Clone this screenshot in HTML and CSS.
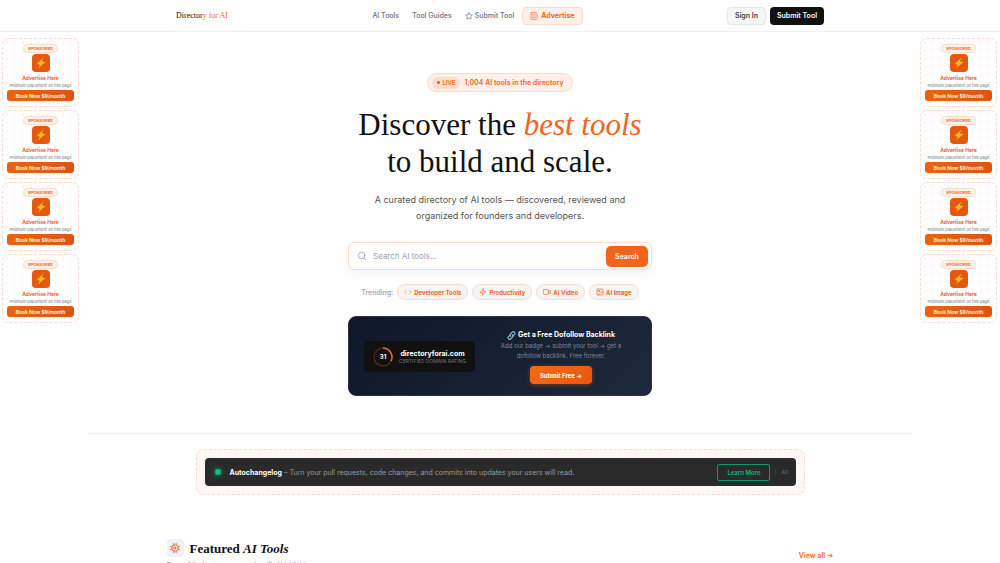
FILE: index.html
```html
<!DOCTYPE html>
<html lang="en">
<head>
  <meta charset="UTF-8">
  <meta name="viewport" content="width=device-width, initial-scale=1.0">
  <title>Directory for AI</title>
  <link rel="stylesheet" href="styles.css">
</head>
<body>

  <!-- Shared icons -->
  <svg class="sprite" aria-hidden="true">
    <symbol id="bolt" viewBox="0 0 24 24">
      <path d="M17 1 3 14l7 1.500L6 23l15-13-7.500-1.500z" fill="#fdb52a"/>
    </symbol>
  </svg>

  <!-- Header -->
  <header class="header">
    <div class="header-inner">
      <a class="logo" href="#">Director<span>y for AI</span></a>
      <nav class="nav">
        <a href="#">AI Tools</a>
        <a href="#">Tool Guides</a>
        <a href="#">
          <svg class="icon" viewBox="0 0 24 24"><path d="m12 2 3.100 6.300 6.900 1-5 4.900 1.200 6.800L12 17.800 5.800 21 7 14.200 2 9.300l6.900-1z"/></svg>
          Submit Tool
        </a>
        <a class="nav-ad" href="#">
          <svg class="icon" viewBox="0 0 24 24"><rect x="3" y="2" width="18" height="20" rx="2"/><path d="M8 7h2M14 7h2M8 12h2M14 12h2M8 17h2M14 17h2"/></svg>
          Advertise
        </a>
      </nav>
      <div class="header-actions">
        <button class="button button-light">Sign In</button>
        <button class="button button-dark">Submit Tool</button>
      </div>
    </div>
  </header>

  <div class="layout">

    <!-- Left ads -->
    <aside class="ads ads-left">
      <div class="ad">
        <span class="ad-tag">SPONSORED</span>
        <span class="ad-icon"><svg><use href="#bolt"/></svg></span>
        <strong>Advertise Here</strong>
        <p>Premium placement on this page</p>
        <button class="ad-button">Book Now $9/month</button>
      </div>
      <div class="ad">
        <span class="ad-tag">SPONSORED</span>
        <span class="ad-icon"><svg><use href="#bolt"/></svg></span>
        <strong>Advertise Here</strong>
        <p>Premium placement on this page</p>
        <button class="ad-button">Book Now $9/month</button>
      </div>
      <div class="ad">
        <span class="ad-tag">SPONSORED</span>
        <span class="ad-icon"><svg><use href="#bolt"/></svg></span>
        <strong>Advertise Here</strong>
        <p>Premium placement on this page</p>
        <button class="ad-button">Book Now $9/month</button>
      </div>
      <div class="ad">
        <span class="ad-tag">SPONSORED</span>
        <span class="ad-icon"><svg><use href="#bolt"/></svg></span>
        <strong>Advertise Here</strong>
        <p>Premium placement on this page</p>
        <button class="ad-button">Book Now $9/month</button>
      </div>
    </aside>

    <main class="main">

      <!-- Hero -->
      <section class="hero">
        <div class="live-badge"><span class="live">LIVE</span>1,004 AI tools in the directory</div>
        <h1>Discover the <em>best tools</em><br>to build and scale.</h1>
        <p class="lead">A curated directory of AI tools — discovered, reviewed and organized for founders and developers.</p>

        <form class="search">
          <svg class="icon" viewBox="0 0 24 24"><circle cx="11" cy="11" r="8"/><path d="m21 21-4.300-4.300"/></svg>
          <input type="text" placeholder="Search AI tools..." aria-label="Search AI tools">
          <button type="button">Search</button>
        </form>

        <div class="trending">
          <span>Trending:</span>
          <a class="chip" href="#"><svg class="icon faint" viewBox="0 0 24 24"><path d="m8 6-6 6 6 6M16 6l6 6-6 6"/></svg>Developer Tools</a>
          <a class="chip" href="#"><svg class="icon" viewBox="0 0 24 24"><path d="M13 2 3 14h8l-1 8 11-12h-8z"/></svg>Productivity</a>
          <a class="chip" href="#"><svg class="icon" viewBox="0 0 24 24"><rect x="1" y="5" width="15" height="14" rx="2"/><path d="m16 11 6-4v10l-6-4"/></svg>AI Video</a>
          <a class="chip" href="#"><svg class="icon" viewBox="0 0 24 24"><rect x="3" y="3" width="18" height="18" rx="2"/><circle cx="9" cy="9" r="2"/><path d="m21 15-4-4L6 21"/></svg>AI Image</a>
        </div>

        <!-- Backlink card -->
        <div class="backlink">
          <div class="rating">
            <div class="ring">
              <svg viewBox="0 0 40 40"><circle cx="20" cy="20" r="18" stroke="#4b2614"/><path d="M20 2a18 18 0 0 1 16 26" stroke="#f26a1b"/></svg>
              <b>31</b>
            </div>
            <div class="rating-text">
              <strong>directoryforai.com</strong>
              <small>CERTIFIED DOMAIN RATING</small>
            </div>
          </div>
          <div class="backlink-text">
            <h2>
              <svg viewBox="0 0 24 24"><g fill="none" stroke="#8fb8cf" stroke-width="3" stroke-linecap="round"><path d="m10 14-1-1a4 4 0 0 1 0-5l5-5a4 4 0 0 1 6 6l-4 4"/><path d="m14 10 1 1a4 4 0 0 1 0 5l-5 5a4 4 0 0 1-6-6l4-4"/></g></svg>
              Get a Free Dofollow Backlink
            </h2>
            <p>Add our badge → submit your tool → get a dofollow backlink. Free forever.</p>
            <button>Submit Free →</button>
          </div>
        </div>
      </section>

      <!-- Banner -->
      <section class="banner">
        <div class="banner-bar">
          <span class="dot"></span>
          <p><strong>Autochangelog</strong> – Turn your pull requests, code changes, and commits into updates your users will read.</p>
          <a class="learn" href="#">Learn More</a>
          <span class="ad-label">AD</span>
        </div>
      </section>

      <!-- Featured -->
      <section class="featured">
        <span class="featured-icon">
          <svg class="icon" viewBox="0 0 24 24"><rect x="5" y="5" width="14" height="14" rx="3"/><rect x="10" y="10" width="4" height="4"/><path d="M9 1v4M15 1v4M9 19v4M15 19v4M1 9h4M1 15h4M19 9h4M19 15h4"/></svg>
        </span>
        <h2>Featured <em>AI Tools</em></h2>
        <a href="#">View all →</a>
        <p>Some of the best new apps and verified highlights</p>
      </section>
    </main>

    <!-- Right ads -->
    <aside class="ads ads-right">
      <div class="ad">
        <span class="ad-tag">SPONSORED</span>
        <span class="ad-icon"><svg><use href="#bolt"/></svg></span>
        <strong>Advertise Here</strong>
        <p>Premium placement on this page</p>
        <button class="ad-button">Book Now $9/month</button>
      </div>
      <div class="ad">
        <span class="ad-tag">SPONSORED</span>
        <span class="ad-icon"><svg><use href="#bolt"/></svg></span>
        <strong>Advertise Here</strong>
        <p>Premium placement on this page</p>
        <button class="ad-button">Book Now $9/month</button>
      </div>
      <div class="ad">
        <span class="ad-tag">SPONSORED</span>
        <span class="ad-icon"><svg><use href="#bolt"/></svg></span>
        <strong>Advertise Here</strong>
        <p>Premium placement on this page</p>
        <button class="ad-button">Book Now $9/month</button>
      </div>
      <div class="ad">
        <span class="ad-tag">SPONSORED</span>
        <span class="ad-icon"><svg><use href="#bolt"/></svg></span>
        <strong>Advertise Here</strong>
        <p>Premium placement on this page</p>
        <button class="ad-button">Book Now $9/month</button>
      </div>
    </aside>
  </div>

</body>
</html>
```
FILE: styles.css
```css
* {
  box-sizing: border-box;
  margin: 0;
}
body {
  background-color: #fefefe;
  color: #111;
  font-family: Inter, "Liberation Sans", sans-serif;
  font-size: 7px;
}
a {
  color: inherit;
  text-decoration: none;
}
button {
  border: none;
  font-family: inherit;
  cursor: pointer;
  white-space: nowrap;
}
.sprite {
  position: absolute;
  width: 0;
  height: 0;
}
.icon {
  width: 8px;
  height: 8px;
  flex: none;
  fill: none;
  stroke: currentColor;
  stroke-width: 2;
  stroke-linecap: round;
  stroke-linejoin: round;
}
/* Header */
.header {
  border-bottom: 1px solid #f1f1f1;
}
.header-inner {
  display: flex;
  align-items: center;
  justify-content: space-between;
  max-width: 648px;
  height: 31px;
  margin: 0 auto;
}
.logo {
  font-family: "Liberation Serif", serif;
  font-size: 8px;
}
.logo span {
  color: #f26a1b;
}
.nav {
  display: flex;
  align-items: center;
  gap: 13px;
  color: #6b7280;
  font-weight: 500;
}
.nav a {
  display: flex;
  align-items: center;
  gap: 2px;
}
.nav .nav-ad {
  gap: 3px;
  height: 18px;
  margin-left: -5px;
  padding: 0 7px;
  background-color: #fff1e9;
  border: 1px solid #fddccb;
  border-radius: 4px;
  color: #f2641a;
  font-weight: 700;
}
.header-actions {
  display: flex;
  gap: 4px;
}
.button {
  height: 18px;
  padding: 0 7px;
  border-radius: 4px;
  font-size: 7px;
  font-weight: 600;
}
.button-light {
  background-color: #f5f5f5;
  border: 1px solid #e6e6e6;
  color: #444;
}
.button-dark {
  background-color: #111;
  color: #fff;
}
.layout {
  display: grid;
  grid-template-columns: 88px 1fr 88px;
}
/* Side ads */
.ads {
  display: flex;
  flex-direction: column;
  gap: 3px;
  padding-top: 6px;
}
.ads-left {
  align-items: flex-start;
  padding-left: 2px;
}
.ads-right {
  align-items: flex-end;
  padding-right: 3px;
}
.ad {
  display: flex;
  flex-direction: column;
  align-items: center;
  width: 77px;
  padding: 5px 4px;
  border: 1px dashed #fddccb;
  border-radius: 7px;
  background-image: radial-gradient(#fdf3ee 1px, transparent 1px);
  background-size: 8px 8px;
}
.ad-tag {
  padding: 0 4px;
  background-color: #fff1e9;
  border: 1px solid #fddccb;
  border-radius: 5px;
  color: #f2641a;
  font-size: 4px;
  font-weight: 600;
  line-height: 7px;
}
.ad-icon {
  display: grid;
  place-items: center;
  width: 18px;
  height: 18px;
  margin-top: 1px;
  background-color: #e2590f;
  border-radius: 4px;
}
.ad-icon svg {
  width: 12px;
  height: 12px;
}
.ad strong {
  margin-top: 2px;
  color: #f2641a;
  font-size: 5px;
  line-height: 8px;
}
.ad p {
  color: #6b7280;
  font-size: 4px;
  line-height: 8px;
  white-space: nowrap;
}
.ad-button {
  width: 100%;
  height: 11px;
  flex: none;
  padding: 0;
  background: linear-gradient(90deg, #ea640f, #dc5510);
  border-radius: 3px;
  color: #fff;
  font-size: 5px;
  font-weight: 600;
}
/* Hero */
.hero {
  display: flex;
  flex-direction: column;
  align-items: center;
  padding: 41px 0 37px;
  border-bottom: 1px solid #f1f1f1;
  text-align: center;
}
.live-badge {
  display: flex;
  align-items: center;
  gap: 4px;
  height: 19px;
  padding: 0 8px 0 4px;
  background-color: #fff1e9;
  border: 1px solid #fddccb;
  border-radius: 10px;
  color: #f2641a;
  font-weight: 600;
}
.live {
  display: flex;
  align-items: center;
  gap: 2px;
  height: 12px;
  padding: 0 5px;
  background-color: #fddccb;
  border-radius: 6px;
  font-size: 6px;
}
.live::before {
  content: "";
  width: 3px;
  height: 3px;
  background-color: #e2590f;
  border-radius: 50%;
}
h1 {
  margin-top: 14px;
  font-family: "Liberation Serif", serif;
  font-size: 31px;
  font-weight: 400;
  line-height: 37px;
}
h1 em {
  color: #f2641a;
}
.lead {
  max-width: 270px;
  margin-top: 12px;
  color: #555;
  font-size: 9px;
  line-height: 16px;
}
.search {
  display: flex;
  align-items: center;
  gap: 6px;
  width: 100%;
  max-width: 304px;
  height: 28px;
  margin-top: 18px;
  padding: 0 3px 0 8px;
  background-color: #fff;
  border: 1px solid #fddccb;
  border-radius: 7px;
  box-shadow: 0 2px 6px rgba(0, 0, 0, 0.05);
}
.search .icon {
  width: 10px;
  height: 10px;
  color: #94a3b8;
}
.search input {
  flex: 1;
  min-width: 0;
  padding: 0;
  background: none;
  border: none;
  outline: none;
  font-family: inherit;
  font-size: 8px;
}
.search input::placeholder {
  color: #9ca3af;
}
.search button {
  width: 42px;
  height: 21px;
  padding: 0;
  background-color: #f26419;
  border-radius: 5px;
  color: #fff;
  font-size: 7px;
  font-weight: 600;
}
.trending {
  display: flex;
  align-items: center;
  gap: 4px;
  margin-top: 14px;
  color: #9ca3af;
  font-weight: 500;
}
.chip {
  display: flex;
  align-items: center;
  gap: 2px;
  height: 16px;
  padding: 0 6px;
  background-color: #f5f5f5;
  border: 1px solid #fddccb;
  border-radius: 8px;
  color: #f2641a;
  font-size: 6px;
  font-weight: 700;
}
.chip .faint {
  opacity: 0.6;
}
/* Backlink card */
.backlink {
  display: flex;
  align-items: center;
  justify-content: space-between;
  width: 100%;
  max-width: 304px;
  margin-top: 16px;
  padding: 12px 15px 11px;
  background: linear-gradient(135deg, #0f172a, #1e293b);
  border: 1px solid #3a2f3a;
  border-radius: 8px;
}
.rating {
  display: flex;
  align-items: center;
  gap: 6px;
  height: 31px;
  padding: 0 9px;
  background-color: #111;
  border-radius: 5px;
}
.ring {
  display: grid;
  place-items: center;
}
.ring > * {
  grid-area: 1 / 1;
}
.ring svg {
  width: 20px;
  height: 20px;
  fill: none;
  stroke-width: 3;
}
.ring b {
  color: #fff;
  font-size: 6px;
}
.rating-text strong,
.rating-text small {
  display: block;
}
.rating-text strong {
  color: #fff;
  font-size: 7px;
  line-height: 8px;
}
.rating-text small {
  color: #777;
  font-size: 5px;
  line-height: 6px;
}
.backlink-text {
  width: 150px;
}
.backlink-text h2 {
  display: flex;
  align-items: center;
  justify-content: center;
  gap: 2px;
  color: #fff;
  font-size: 7px;
  font-weight: 700;
  line-height: 12px;
}
.backlink-text svg {
  width: 9px;
  height: 9px;
}
.backlink-text p {
  padding: 0 10px;
  color: #7c8698;
  font-size: 6px;
  line-height: 10px;
}
.backlink-text button {
  height: 18px;
  margin-top: 5px;
  padding: 0 10px;
  background: linear-gradient(135deg, #f26a1b, #ea580c);
  border-radius: 4px;
  box-shadow: 0 1px 5px rgba(242, 100, 26, 0.4);
  color: #fff;
  font-size: 6px;
  font-weight: 700;
}
/* Banner */
.banner {
  max-width: 609px;
  margin: 15px auto 0;
  padding: 8px;
  background-color: #fff7f3;
  border: 1px dashed #fddccb;
  border-radius: 8px;
}
.banner-bar {
  display: flex;
  align-items: center;
  height: 28px;
  padding: 0 7px 0 10px;
  background-color: #2a2a2a;
  border-radius: 4px;
  color: #999;
}
.banner-bar strong {
  color: #fff;
  font-weight: 700;
}
.dot {
  width: 6px;
  height: 6px;
  background-color: #10b981;
  border-radius: 50%;
  box-shadow: 0 0 4px 1px #0c7d58;
}
.banner-bar p {
  flex: 1;
  margin-left: 9px;
}
.learn {
  padding: 0 9px;
  border: 1px solid #14966d;
  border-radius: 2px;
  color: #14b884;
  font-size: 6px;
  font-weight: 600;
  line-height: 15px;
}
.ad-label {
  margin-left: 5px;
  padding-left: 5px;
  border-left: 1px solid #3a3a3a;
  color: #666;
  font-size: 5px;
}
/* Featured */
.featured {
  display: grid;
  grid-template-columns: auto 1fr auto;
  align-items: center;
  column-gap: 6px;
  max-width: 667px;
  margin: 44px auto 0;
}
.featured-icon {
  display: grid;
  place-items: center;
  width: 17px;
  height: 18px;
  background-color: #f0effe;
  border-radius: 4px;
  color: #f2641a;
}
.featured-icon .icon {
  width: 10px;
  height: 10px;
}
.featured h2 {
  font-family: "Liberation Serif", serif;
  font-size: 13px;
  line-height: 17px;
}
.featured a {
  align-self: end;
  grid-row: 1 / 3;
  grid-column: 3;
  padding-bottom: 9px;
  color: #f2641a;
  font-size: 7px;
  font-weight: 600;
}
.featured p {
  grid-column: 1 / 3;
  margin-top: 3px;
  color: #6b7280;
  font-size: 6px;
  line-height: 9px;
}
```
